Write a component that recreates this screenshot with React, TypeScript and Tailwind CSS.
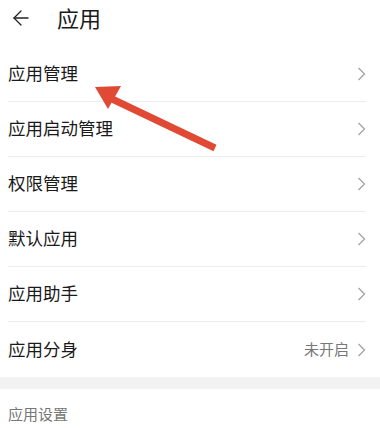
import { ArrowLeft } from "lucide-react";

const rows = [
  { label: "应用管理" },
  { label: "应用启动管理" },
  { label: "权限管理" },
  { label: "默认应用" },
  { label: "应用助手" },
  { label: "应用分身", value: "未开启", last: true },
];

function Chevron() {
  return (
    <svg width="9" height="16" viewBox="0 0 9 16" className="shrink-0">
      <path d="M1.5 2 L7.5 8 L1.5 14" fill="none" stroke="#a3a3a3" strokeWidth="1.3" />
    </svg>
  );
}

export default function App() {
  return (
    <div
      className="relative w-[380px] h-[428px] overflow-hidden bg-white text-[#1a1a1a]"
      style={{ fontFamily: '"Noto Sans", "Noto Sans CJK SC", sans-serif' }}
    >
      <div className="flex items-center h-[35px] pl-[9px]">
        <ArrowLeft size={24} strokeWidth={1.3} className="text-[#222]" />
        <h1 className="ml-[24px] text-[22px] leading-none">应用</h1>
      </div>

      <div className="mt-[12px]">
        {rows.map((row) => (
          <div
            key={row.label}
            className={
              "flex items-center justify-between h-[55px] ml-[8px] mr-[14px] " +
              (row.last ? "" : "border-b border-[#ececec]")
            }
          >
            <span className="text-[17.5px] leading-none">{row.label}</span>
            <div className="flex items-center gap-[8px]">
              {row.value && <span className="text-[15px] text-[#777] leading-none">{row.value}</span>}
              <Chevron />
            </div>
          </div>
        ))}
      </div>

      <div className="h-[12px] bg-[#f2f2f2]" />

      <div className="pl-[8px] pt-[14px] text-[15px] text-[#777]">应用设置</div>

      <svg className="absolute left-0 top-0" width="380" height="428" viewBox="0 0 380 428">
        <line x1="215" y1="148" x2="110" y2="98" stroke="#e04a35" strokeWidth="7" strokeLinecap="butt" />
        <polygon points="95,87 121,86 108,109" fill="#e04a35" />
      </svg>
    </div>
  );
}
